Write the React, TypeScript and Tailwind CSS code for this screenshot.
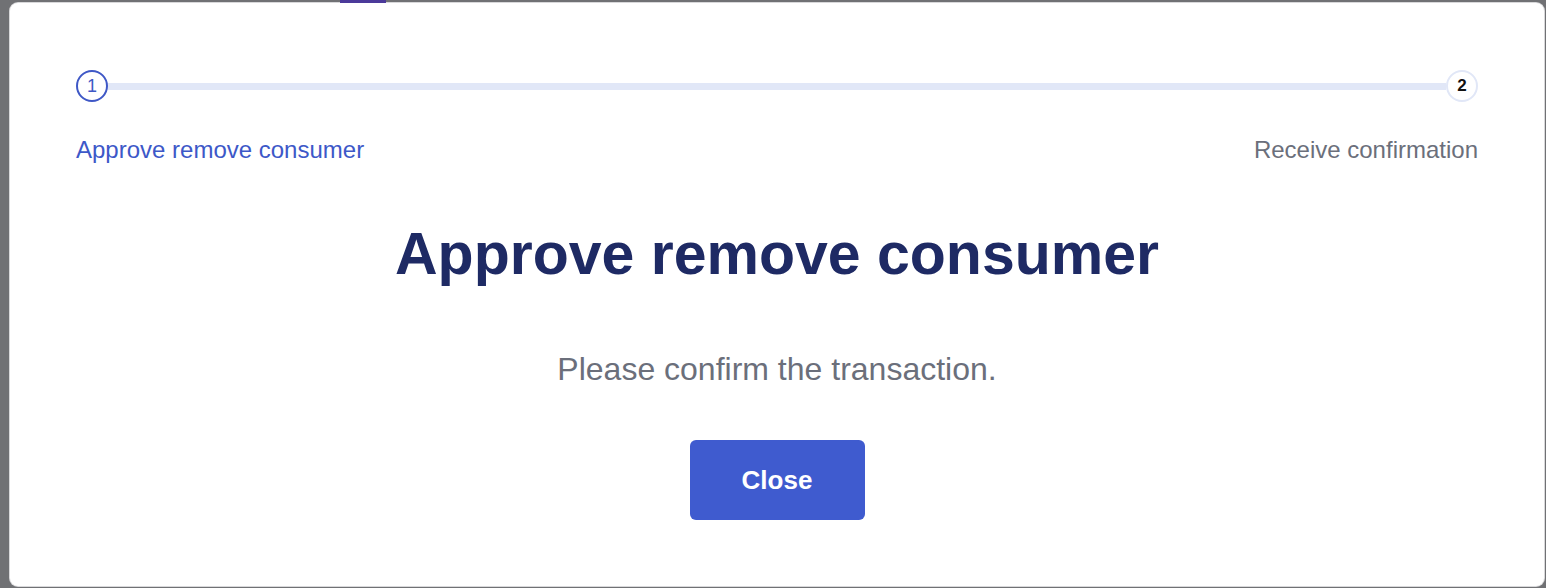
import React from "react";

export default function App() {
  return (
    <div
      className="relative w-full h-[588px] bg-[#707174] overflow-hidden pt-[3px] pl-[10px] pr-[2px] pb-[2px]"
      style={{ fontFamily: '"Liberation Sans", Arial, sans-serif' }}
    >
      <div className="absolute left-[340px] top-0 w-[46px] h-[3px] bg-[#4b3a9a]" />
      <div className="h-[583px] rounded-[8px] bg-white ring-1 ring-[#d8d8da] px-[66px] pt-[67px]">
        <div className="flex items-center">
          <div className="w-[32px] h-[32px] rounded-full border-2 border-[#3f58c6] flex items-center justify-center text-[18px] font-medium text-[#3f58c6]">
            1
          </div>
          <div className="flex-1 h-[7px] bg-[#e1e7f7]" />
          <div className="w-[32px] h-[32px] rounded-full border-2 border-[#e1e7f7] flex items-center justify-center text-[17px] font-bold text-[#111]">
            2
          </div>
        </div>
        <div className="flex justify-between mt-[32px] text-[24px] leading-[32px]">
          <span className="text-[#3d58c8]">Approve remove consumer</span>
          <span className="text-[#6b6f7b]">Receive confirmation</span>
        </div>
        <h1 className="mt-[59px] text-center text-[59px] leading-[59px] font-bold text-[#1e2a64]">
          Approve remove consumer
        </h1>
        <p className="mt-[65px] text-center text-[32px] leading-[40px] text-[#6b6f7b]">
          Please confirm the transaction.
        </p>
        <div className="flex justify-center mt-[51px]">
          <button className="w-[175px] h-[80px] rounded-[6px] bg-[#3f5bcf] text-white text-[26px] font-bold">
            Close
          </button>
        </div>
      </div>
    </div>
  );
}
